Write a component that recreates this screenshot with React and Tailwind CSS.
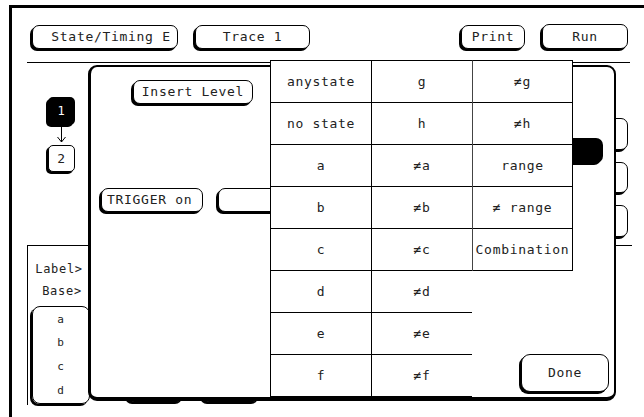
import React from "react";

function Btn({ className = "", children }) {
  return (
    <div
      className={
        "flex items-center justify-center border border-black rounded-[7px] bg-white shadow-[-2px_2px_0_0_#000] whitespace-pre " +
        className
      }
    >
      {children}
    </div>
  );
}

const col1 = ["anystate", "no state", "a", "b", "c", "d", "e", "f"];
const col2 = ["g", "h", "≠a", "≠b", "≠c", "≠d", "≠e", "≠f"];
const col3 = ["≠g", "≠h", "range", "≠ range", "Combination"];

function Col({ items, className = "" }) {
  return (
    <div className={"flex flex-col w-[101px] bg-white border-t border-l border-black " + className}>
      {items.map((t, i) => (
        <div
          key={i}
          className="h-[42px] border-b border-black flex items-center justify-center whitespace-pre"
        >
          {t}
        </div>
      ))}
    </div>
  );
}

export default function App() {
  return (
    <div className="relative w-[644px] h-[417px] bg-white overflow-hidden font-['DejaVu_Sans_Mono','Liberation_Mono',monospace] text-[13px] tracking-[0.7px] text-[#222]">
      {/* base frame */}
      <div className="ml-[9px] mt-[5px] h-[412px] border-t-[3px] border-l-[3px] border-black flex flex-col">
        {/* top buttons */}
        <div className="flex items-start mt-[17px] pl-[20px] pr-[16px]">
          <Btn className="w-[146px] h-[24px] pl-[12px]">State/Timing E</Btn>
          <Btn className="w-[115px] h-[24px] ml-[17px]">Trace 1</Btn>
          <Btn className="w-[64px] h-[24px] ml-auto">Print</Btn>
          <Btn className="w-[86px] h-[25px] ml-[17px] -mt-[1px]">Run</Btn>
        </div>
        <div className="h-px bg-black ml-[15px] mr-[14px] mt-[13px]" />

        {/* main area */}
        <div className="flex h-[182px]">
          <div className="flex flex-col ml-[36px] mt-[34px] w-[27px] items-center">
            <div className="w-[27px] h-[28px] bg-black text-white rounded-[5px] shadow-[-2px_2px_0_0_#000] flex items-center justify-center text-[12px]">
              1
            </div>
            <svg width="27" height="20" viewBox="0 0 27 20" className="block">
              <line x1="13.5" y1="1" x2="13.5" y2="17" stroke="#000" strokeWidth="1" />
              <polyline points="9.5,12 13.5,17 17.5,12" fill="none" stroke="#000" strokeWidth="1" />
            </svg>
            <div className="w-[27px] h-[27px] bg-white border border-black rounded-[5px] shadow-[-2px_2px_0_0_#000] flex items-center justify-center">
              2
            </div>
          </div>
          <div className="ml-auto mr-[16px] mt-[55px] flex flex-col gap-[12px]">
            <Btn className="w-[100px] h-[32px]" />
            <Btn className="w-[100px] h-[31px]" />
            <Btn className="w-[100px] h-[32px]" />
          </div>
        </div>

        {/* bottom panel */}
        <div className="ml-[15px] mr-[12px] h-[160px] border-t border-l border-black flex">
          <div className="w-[62px] flex flex-col text-[12px]">
            <div className="mt-[12px] h-[22px] flex items-center justify-center">Label&gt;</div>
            <div className="h-[22px] flex items-center justify-center pl-[6px]">Base&gt;</div>
            <div className="mt-[4px] ml-[4px] w-[58px] h-[98px] border border-black rounded-[8px] shadow-[-2px_2px_0_0_#000] flex flex-col pt-[1px] text-[11px]">
              {["a", "b", "c", "d"].map((t) => (
                <div key={t} className="h-[24px] flex items-center justify-center">
                  {t}
                </div>
              ))}
            </div>
          </div>
          <div className="flex items-end pb-[3px]">
            <Btn className="ml-[37px] w-[57px] h-[26px]" />
            <Btn className="ml-[18px] w-[58px] h-[26px]" />
          </div>
        </div>
      </div>

      {/* dialog */}
      <div className="absolute left-[88px] top-[65px] w-[528px] h-[336px] bg-white border-l-[3px] border-t-2 border-r-2 border-b-4 border-black rounded-[9px] flex flex-col">
        <Btn className="ml-[42px] mt-[13px] w-[120px] h-[24px]">Insert Level</Btn>
        <div className="self-end mr-[11px] mt-[34px] w-[130px] h-[25px] bg-black rounded-[7px] shadow-[-2px_2px_0_0_#000]" />
        <div className="flex mt-[25px]">
          <Btn className="ml-[10px] w-[102px] h-[24px] justify-start pl-[5px]">TRIGGER on</Btn>
          <Btn className="ml-[15px] w-[200px] h-[24px]" />
        </div>
        <Btn className="self-end mt-auto mb-[5px] mr-[5px] w-[88px] h-[38px] rounded-[9px]">Done</Btn>
      </div>

      {/* selection table */}
      <div className="absolute left-[270px] top-[60px] flex items-start">
        <Col items={col1} />
        <Col items={col2} />
        <Col items={col3} className="border-r border-l-[#444]" />
      </div>
    </div>
  );
}
